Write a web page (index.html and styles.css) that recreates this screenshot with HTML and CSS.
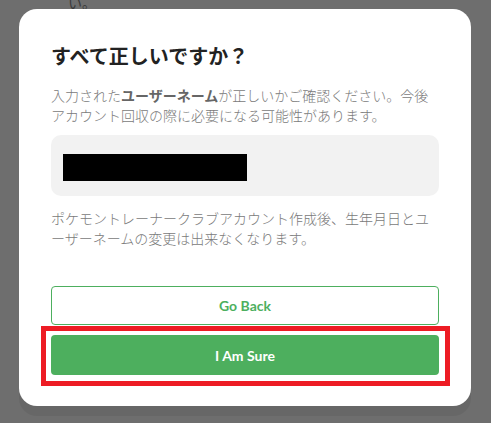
FILE: index.html
```html
<!DOCTYPE html>
<html lang="ja">
<head>
<meta charset="utf-8">
<title>確認</title>
<link rel="stylesheet" href="styles.css">
</head>
<body>
<div class="page-behind">い。</div>
<div class="overlay">
  <div class="modal">
    <h1 class="modal-title">すべて正しいですか？</h1>
    <p class="modal-text">入力された<strong>ユーザーネーム</strong>が正しいかご確認ください。今後アカウント回収の際に必要になる可能性があります。</p>
    <div class="value-box"><div class="redacted"></div></div>
    <p class="modal-text note">ポケモントレーナークラブアカウント作成後、生年月日とユーザーネームの変更は出来なくなります。</p>
    <div class="actions">
      <button class="btn btn-outline">Go Back</button>
      <div class="highlight-wrap">
        <button class="btn btn-primary">I Am Sure</button>
        <div class="highlight"></div>
      </div>
    </div>
  </div>
</div>
</body>
</html>
```

FILE: styles.css
```css
html, body {
  margin: 0;
  padding: 0;
}
body {
  width: 491px;
  height: 423px;
  overflow: hidden;
  background: #6e6e6e;
  font-family: "Noto Sans CJK JP", "Noto Sans", sans-serif;
  position: relative;
}
.page-behind {
  position: absolute;
  top: -8px;
  left: 68px;
  font-size: 14px;
  color: #3a3a3a;
  font-family: "Noto Sans CJK JP", sans-serif;
}
.overlay {
  padding: 9px 0 0 19px;
  position: relative;
}
.modal {
  width: 452px;
  box-sizing: border-box;
  background: #ffffff;
  border-radius: 18px;
  padding: 33px 32px 31px 32px;
  box-shadow: 0 10px 0 rgba(0,0,0,0.06);
}
.modal-title {
  margin: 0;
  font-size: 20px;
  line-height: 28px;
  font-weight: 700;
  color: #222222;
}
.modal-text {
  margin: 15px 0 0 0;
  font-size: 14px;
  line-height: 20px;
  font-weight: 300;
  color: #7a7a7a;
  line-break: loose;
}
.modal-text strong {
  font-weight: 700;
  color: #666666;
}
.value-box {
  margin-top: 10px;
  height: 61px;
  box-sizing: border-box;
  background: #f2f2f2;
  border-radius: 10px;
  padding: 19px 12px 0 12px;
}
.redacted {
  width: 184px;
  height: 27px;
  background: #000000;
}
.note {
  margin-top: 12px;
}
.actions {
  margin-top: 38px;
  display: flex;
  flex-direction: column;
  gap: 10px;
}
.btn {
  display: block;
  width: 100%;
  height: 39px;
  border-radius: 4px;
  font-family: "Lato", "Roboto", sans-serif;
  font-weight: 700;
  font-size: 14px;
  cursor: pointer;
  padding: 0;
}
.btn-outline {
  background: #ffffff;
  color: #4daf5e;
  border: 1px solid #4daf5e;
}
.btn-primary {
  height: 40px;
  background: #4daf5e;
  color: #ffffff;
  border: none;
}
.highlight-wrap {
  position: relative;
}
.highlight {
  position: absolute;
  top: -9px;
  left: -10px;
  right: -11px;
  bottom: -11px;
  border: 5px solid #ed1c24;
  pointer-events: none;
}
```
